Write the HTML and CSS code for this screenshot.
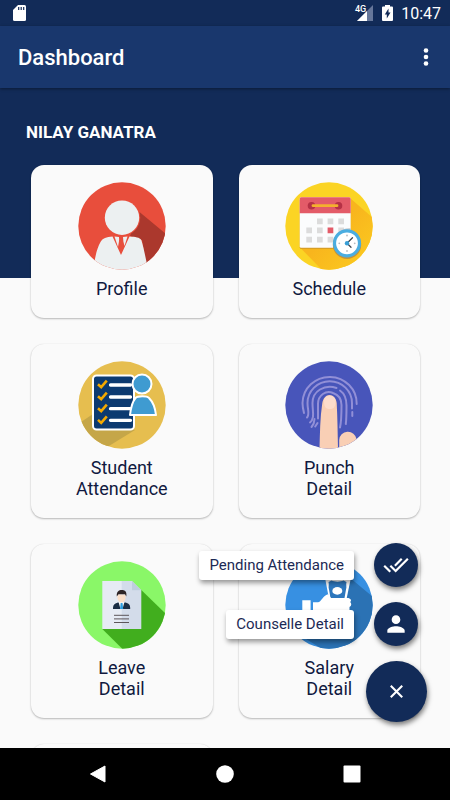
FILE: index.html
```html
<!DOCTYPE html>
<html lang="en">
<head>
<meta charset="utf-8">
<meta name="viewport" content="width=device-width, initial-scale=1">
<title>Dashboard</title>
<link rel="stylesheet" href="styles.css">
</head>
<body>
<div class="status">
  <svg class="sd" viewBox="0 0 13 16" aria-hidden="true"><path fill="#fff" d="M5 0h6.500a1.500 1.500 0 0 1 1.500 1.500v13a1.500 1.500 0 0 1-1.500 1.500h-10A1.500 1.500 0 0 1 0 14.500V5z"/><path stroke="#122b58" stroke-width="1.200" d="M5.700 2v3M8.200 2v3M10.700 2v3"/></svg>
  <div class="status-right">
    <span class="network">4G</span>
    <svg class="signal" viewBox="0 0 16 16" aria-hidden="true"><path fill="#66779a" d="M16 0v16H0z"/><path fill="#fff" d="M10 6v10H0z"/></svg>
    <svg class="battery" viewBox="0 0 11 16" aria-hidden="true"><path fill="#fff" d="M3 0h5v1.500h2a1 1 0 0 1 1 1V15a1 1 0 0 1-1 1H1a1 1 0 0 1-1-1V2.500a1 1 0 0 1 1-1h2z"/><path fill="#122b58" d="M6.500 3.500v4H8.500L4.800 13.500V9.500H2.800z"/></svg>
    <span class="time">10:47</span>
  </div>
</div>
<header class="appbar">
  <h1>Dashboard</h1>
  <button class="more" aria-label="More options"><svg viewBox="0 0 6 20" aria-hidden="true"><g fill="#fff"><circle cx="3" cy="3.500" r="2.300"/><circle cx="3" cy="10" r="2.300"/><circle cx="3" cy="16.500" r="2.300"/></g></svg></button>
</header>
<main class="content">
  <section class="hero"><h2>NILAY GANATRA</h2></section>
  <div class="cards">
    <a class="card" href="#profile">
      <svg viewBox="0 0 88 88" aria-hidden="true">
        <clipPath id="disc"><circle cx="44" cy="44" r="43.700"/></clipPath>
        <g clip-path="url(#disc)">
          <path fill="#e84e3c" d="M0 0h88v88H0z"/>
          <path fill="#ab382d" d="M61.500 30L88 52v36H69L64 58l-12-4z"/>
          <circle cx="44" cy="35.700" r="18.200" fill="#e84e3c"/>
          <circle cx="44" cy="35.700" r="17.200" fill="#ecf0f1"/>
          <path fill="#ecf0f1" d="M16.500 88v-8c1-7 3-15 6-20 2-4 6-5 12-5.500L43 73l8.500-18.500c6 .5 10 .5 12 4C65.500 65 67 73 68.500 80v8z"/>
          <path fill="#ecf0f1" d="M36.500 54.500l4.500.5c.5 3-.5 7-1 10zM45 55l4.500-.5L46.500 64c-1-3-1.500-6-1.500-9z"/>
        </g>
      </svg>
      <span>Profile</span>
    </a>
    <a class="card" href="#schedule">
      <svg viewBox="0 0 88 88" aria-hidden="true">
        <defs><linearGradient id="gold" x1="0" y1="0" x2="1" y2="1"><stop offset=".45" stop-color="#f8b51d"/><stop offset="1" stop-color="#fccd20"/></linearGradient></defs>
        <g clip-path="url(#disc)">
          <path fill="#fbd424" d="M0 0h88v88H0z"/>
          <path fill="url(#gold)" d="M65 16l23 20v52H37L15 65.500z"/>
          <rect x="14.700" y="17" width="51" height="50" rx="1.500" fill="#d99f24"/>
          <rect x="14.700" y="15.300" width="51" height="50.400" rx="1.500" fill="#fbfcfd"/>
          <path fill="#e35b68" d="M16.200 15.300h48a1.500 1.500 0 0 1 1.500 1.500v14.500h-51V16.800a1.500 1.500 0 0 1 1.500-1.500z"/>
          <circle cx="26.500" cy="23.700" r="3.800" fill="#b53145"/><circle cx="53.500" cy="23.700" r="3.800" fill="#b53145"/>
          <path stroke="#f4b02e" stroke-width="2.800" stroke-linecap="round" d="M28 23.700h24"/>
          <path fill="#dcdcdc" d="M32 36.500h5.700v5.700H32zM42.600 36.500h5.700v5.700h-5.700zM53.300 36.500H59v5.700h-5.700zM21.300 45.600H27v5.700h-5.700zM32 45.600h5.700v5.700H32zM53.300 45.600H59v5.700h-5.700zM21.300 54.700H27v5.700h-5.700zM32 54.700h5.700v5.700H32zM42.600 54.700h5.700v5.700h-5.700z"/>
          <path fill="#e35b68" d="M42.600 45.600h5.700v5.700h-5.700z"/>
          <path fill="#c5c8cb" d="M65.700 46.300v19.400H49A15.500 15.500 0 0 1 65.700 46.300z"/>
          <circle cx="62" cy="62.700" r="14.200" fill="#c59338"/>
          <circle cx="62" cy="61.300" r="12.500" fill="#fff" stroke="#4bade0" stroke-width="3.200"/>
          <path stroke="#3c4650" stroke-width="1.300" stroke-linecap="round" d="M62 61.300l5.500-5.500M62 61.300l4 4"/>
          <circle cx="62" cy="61.300" r="2.200" fill="#399fd6"/>
          <g fill="#b8bbc0"><circle cx="62" cy="53.500" r=".9"/><circle cx="62" cy="69" r=".9"/><circle cx="54.300" cy="61.300" r=".9"/><circle cx="69.700" cy="61.300" r=".9"/></g>
        </g>
      </svg>
      <span>Schedule</span>
    </a>
    <a class="card" href="#attendance">
      <svg viewBox="0 0 88 88" aria-hidden="true">
        <g clip-path="url(#disc)">
          <path fill="#e6be4f" d="M0 0h88v88H0z"/>
          <path fill="#c5a648" d="M15 53L0 63v25h26l31-19z"/>
          <rect x="15" y="14.500" width="41" height="54" rx="3.500" fill="#0c3a70" stroke="#fff" stroke-width="2"/>
          <path stroke="#fff" stroke-width="3.300" stroke-linecap="round" d="M32.500 24h20M32.500 36h20M32.500 47.700h20M32.500 59.300h20"/>
          <path fill="none" stroke="#f4a900" stroke-width="2.600" d="M20 23.200l3.200 3 5.600-6.500M20 35.200l3.200 3 5.600-6.500M20 47.200l3.200 3 5.600-6.500M20 58.900l3.200 3 5.600-6.500"/>
          <g fill="#3f9bd1" stroke="#fff" stroke-width="2"><path d="M52 54c1-9 3-14 5.500-17 2-2.500 11.500-2.500 13.500 0 3 3 6 8 7 17z" stroke-linejoin="round"/><circle cx="64" cy="23" r="9.500"/></g>
        </g>
      </svg>
      <span>Student<br>Attendance</span>
    </a>
    <a class="card" href="#punch">
      <svg viewBox="0 0 88 88" aria-hidden="true">
        <g clip-path="url(#disc)">
          <path fill="#4855ba" d="M0 0h88v88H0z"/>
          <g fill="none" stroke="#918fd7" stroke-width="2" stroke-linecap="round">
            <path d="M19 52c-1-4-1.500-7-1.500-10a27 26.500 0 0 1 54.200 1"/>
            <path d="M22 56.500c3-3 .5-8 .5-14.500a22 21.500 0 0 1 44.500 0v5.500M67.300 51v4"/>
            <path d="M25 61.500c5-4 2.500-11 2.500-19.500 0-12 12-19 24-15M55 29.500c5 3.500 6.500 8 6.500 15 0 7 0 13-.7 18.500"/>
            <path d="M33 57.500V43c0-9 8-14 15-11 6 2 8.500 6 8.500 12 0 8 0 16-1.500 22.500M32.500 62l-2.300 3.500"/>
            <path d="M26.500 66c2.500-3 3-5 3-8"/>
          </g>
          <path fill="#f9cfb5" d="M34.500 88c.5-16 .5-31 2.800-46 1-5 3.700-8 7.200-8s6.700 3 7.200 8c.8 15 1 30 1.300 46zM54.200 88v-9a8.700 8.500 0 0 1 17.300-1v10z"/>
          <path fill="#fcdccb" d="M39 40c0-7 11.500-7 11.500 0s-2.500 8-5.700 8S39 47 39 40z"/>
        </g>
      </svg>
      <span>Punch<br>Detail</span>
    </a>
    <a class="card" href="#leave">
      <svg viewBox="0 0 88 88" aria-hidden="true">
        <g clip-path="url(#disc)">
          <path fill="#8af768" d="M0 0h88v88H0z"/>
          <path fill="#41ae1e" d="M63.300 29L88 53v35H44.500L24.300 68z"/>
          <path fill="#e6ebf4" d="M24.300 20h20v48h-20z"/><path fill="#d3dcea" d="M43.700 20H54l9.300 9.300V68H43.700z"/><path fill="#bfcddd" d="M54 20l9.300 9.300H54z"/>
          <path fill="#1b2e45" d="M35 48c0-4 1-5.500 5-6.500h7.500c4 1 4.700 2.500 4.700 6.500z"/>
          <path fill="#f7f9fb" d="M40.500 41h6L44.500 48h-2z"/><path fill="#2b9de0" d="M42.700 42h1.800l.7 6h-3.200z"/>
          <path fill="#fbe0ca" d="M39.500 33.500h8c.5 5-1 8-4 8s-4.500-3-4-8z"/>
          <path fill="#2e2527" d="M38.800 35.500c-.5-5 2-6.500 5-6.500 3.500 0 5.200 2 4.500 6.500l-1.300-2.200h-6.500z"/>
          <path stroke="#5c565a" stroke-width="1" d="M36 54.300h15M36 57.900h15M36 61.500h15"/>
        </g>
      </svg>
      <span>Leave<br>Detail</span>
    </a>
    <a class="card" href="#salary">
      <svg viewBox="0 0 88 88" aria-hidden="true">
        <g clip-path="url(#disc)">
          <path fill="#3790e2" d="M0 0h88v88H0z"/>
          <path fill="#2b72b4" d="M64 16l24 20v52H37L18 76l20-20 24-18z"/>
          <path fill="#fff" d="M39.500 14h27l-5 24H44z"/>
          <path fill="#2d77bd" d="M46.500 19.500c3 1.500 9 1.500 12 0l3 1.500c-.8 3 .5 5-.5 7.500l-1.500 8.500H45.500L44 28.500c-1-2.500.3-4.500-.5-7.500z"/>
          <ellipse cx="52.300" cy="29.900" rx="5" ry="3.800" fill="#fff"/>
          <path fill="#fff" d="M17.300 39.300h8.300V54h-8.300zM28 41.300h5c3 0 5-6.800 10-8l3 3.700h17.500c3 1 3 3 1.700 4 1.500 1.500 1.500 4-.7 5V54H28z"/>
        </g>
      </svg>
      <span>Salary<br>Detail</span>
    </a>
    <a class="card" href="#more" aria-label="More"></a>
  </div>
  <div class="dial">
    <div class="dial-row"><label class="tip" for="pending">Pending Attendance</label><button class="fab mini" id="pending"><svg viewBox="0 0 24 24" aria-hidden="true"><path fill="#fff" d="M18 7l-1.410-1.410-6.340 6.340 1.410 1.410L18 7zm4.240-1.410L11.660 16.170 7.480 12l-1.410 1.410L11.660 19l12-12-1.420-1.410zM.41 13.410L6 19l1.410-1.410L1.830 12 .41 13.410z"/></svg></button></div>
    <div class="dial-row"><label class="tip" for="counselle">Counselle Detail</label><button class="fab mini" id="counselle"><svg viewBox="0 0 24 24" aria-hidden="true"><path fill="#fff" d="M12 12c2.210 0 4-1.790 4-4s-1.790-4-4-4-4 1.790-4 4 1.790 4 4 4zm0 2c-2.670 0-8 1.340-8 4v2h16v-2c0-2.660-5.330-4-8-4z"/></svg></button></div>
    <div class="dial-row"><button class="fab" aria-label="Close"><svg viewBox="0 0 24 24" aria-hidden="true"><path stroke="#fff" stroke-width="2" d="M6.500 6.500l11 11M17.500 6.500l-11 11"/></svg></button></div>
  </div>
</main>
<nav class="nav">
  <button aria-label="Back"><svg viewBox="0 0 18 18" aria-hidden="true"><path fill="#fff" stroke="#fff" stroke-linejoin="round" d="M1.500 9L16 1v16z"/></svg></button>
  <button aria-label="Home"><svg viewBox="0 0 18 18" aria-hidden="true"><circle cx="9" cy="9" r="8.800" fill="#fff"/></svg></button>
  <button aria-label="Recents"><svg viewBox="0 0 18 18" aria-hidden="true"><rect x=".5" y=".5" width="17" height="17" rx="1" fill="#fff"/></svg></button>
</nav>
</body>
</html>
```
FILE: styles.css
```css
* { box-sizing: border-box; }
body {
  margin: 0;
  height: 100vh;
  display: flex;
  flex-direction: column;
  background: #fafafa;
  font-family: Roboto, "Liberation Sans", sans-serif;
}
button { border: 0; padding: 0; background: none; cursor: pointer; }
svg { display: block; }
h1, h2 { margin: 0; }

.status {
  height: 26px;
  flex: none;
  display: flex;
  align-items: center;
  justify-content: space-between;
  padding: 0 9px 0 13px;
  background: #122b58;
  color: #fff;
}
.sd { width: 13px; height: 16px; }
.status-right { display: flex; align-items: center; }
.network { font-size: 9px; font-weight: 500; line-height: 12px; align-self: flex-start; margin-right: -9px; }
.signal { width: 16px; height: 16px; margin-right: 9px; }
.battery { width: 11px; height: 16px; margin-right: 8px; }
.time { font-size: 16px; line-height: 20px; padding-top: 1px; }

.appbar {
  position: relative;
  height: 62px;
  flex: none;
  display: flex;
  align-items: center;
  justify-content: space-between;
  padding: 0 13px 0 18px;
  background: #19376d;
  color: #fff;
  box-shadow: 0 1px 3px rgba(0, 0, 0, .4);
  z-index: 1;
}
.appbar h1 { font-size: 22px; font-weight: 500; line-height: 26px; padding-top: 2px; }
.more { width: 22px; height: 44px; display: grid; place-items: center; }
.more svg { width: 6px; height: 20px; }

.content { position: relative; flex: 1; min-height: 0; overflow: hidden; }
.hero { height: 190px; padding: 34px 26px 0; background: #122b58; color: #fff; }
.hero h2 { font-size: 17px; font-weight: 700; line-height: 20px; }

.cards {
  display: grid;
  grid-template-columns: 1fr 1fr;
  gap: 26px;
  margin-top: -113px;
  padding: 0 30px 0 31px;
}
.card {
  min-height: 153px;
  padding: 17px 12px 19px;
  display: flex;
  flex-direction: column;
  align-items: center;
  gap: 8px;
  border-radius: 13px;
  background: #fafafa;
  box-shadow: 0 1px 2px rgba(0, 0, 0, .26), 0 0 1px rgba(0, 0, 0, .12);
  color: #10193f;
  font-size: 18px;
  line-height: 21px;
  text-align: center;
  text-decoration: none;
}
.card svg { width: 88px; height: 88px; }

.dial {
  position: absolute;
  right: 23px;
  bottom: 26px;
  display: flex;
  flex-direction: column;
  align-items: flex-end;
  gap: 15px;
}
.dial-row { display: flex; align-items: center; gap: 20px; }
.tip {
  padding: 4px 10px;
  border-radius: 3px;
  background: #fff;
  box-shadow: 1px 3px 5px rgba(0, 0, 0, .4);
  color: #1c2a55;
  font-size: 15px;
  line-height: 21px;
}
.fab {
  width: 61px;
  height: 61px;
  display: grid;
  place-items: center;
  border-radius: 50%;
  background: #122b58;
  box-shadow: 1px 3px 5px rgba(0, 0, 0, .5);
}
.fab svg { width: 25px; height: 25px; }
.mini { width: 44px; height: 44px; margin-right: 9px; }
.mini svg { width: 26px; height: 26px; }

.nav {
  height: 52px;
  flex: none;
  display: flex;
  align-items: center;
  justify-content: space-between;
  padding: 0 80px;
  background: #000;
}
.nav button { width: 36px; height: 36px; display: grid; place-items: center; }
.nav svg { width: 18px; height: 18px; }
```
